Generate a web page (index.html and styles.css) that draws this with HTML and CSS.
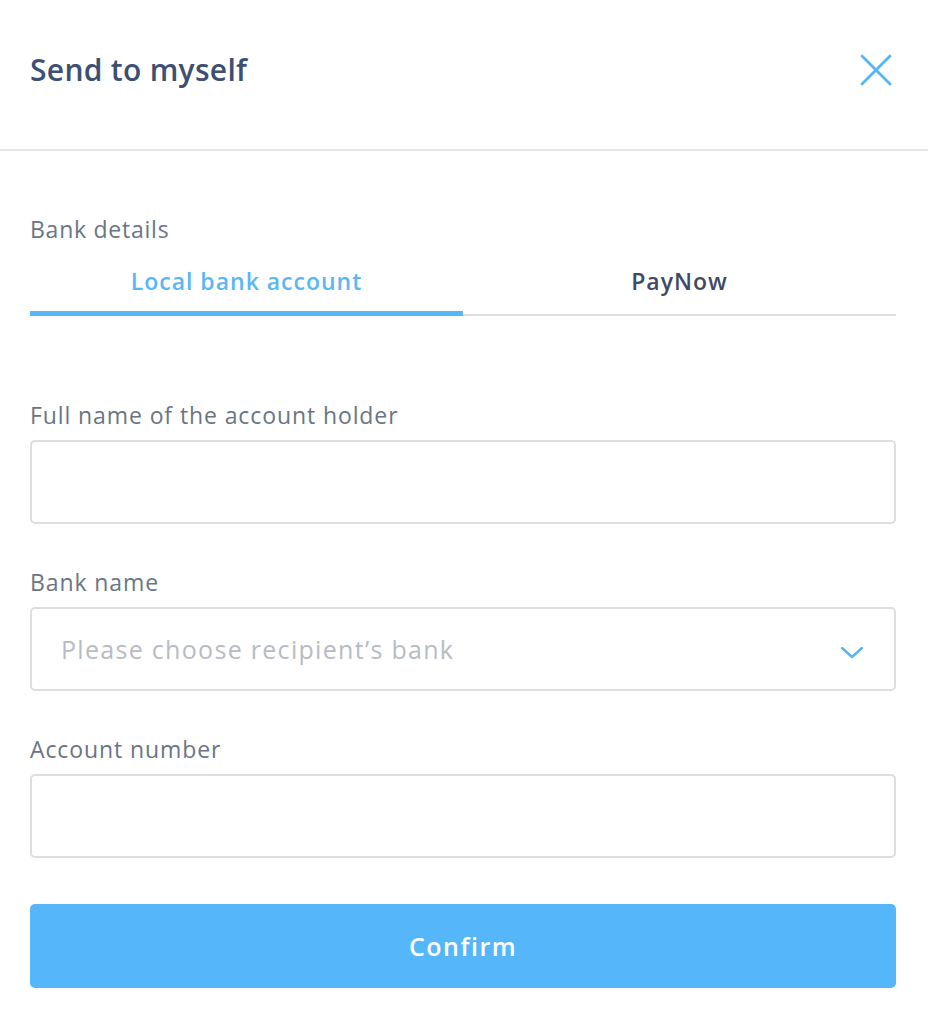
FILE: index.html
```html
<!DOCTYPE html>
<html>
<head>
<meta charset="utf-8">
<link rel="stylesheet" href="styles.css">
</head>
<body>
<div class="modal">
  <header class="header">
    <h1 class="title">Send to myself</h1>
    <button class="close" aria-label="Close">
      <svg width="34" height="34" viewBox="0 0 34 34"><path d="M3 3 L31 31 M31 3 L3 31" stroke="#55b6f5" stroke-width="2.8" stroke-linecap="round" fill="none"/></svg>
    </button>
  </header>
  <main class="body">
    <div class="section-label">Bank details</div>
    <div class="tabs">
      <div class="tab active">Local bank account</div>
      <div class="tab">PayNow</div>
    </div>
    <form class="form">
      <div class="field">
        <label class="label">Full name of the account holder</label>
        <div class="input"></div>
      </div>
      <div class="field">
        <label class="label">Bank name</label>
        <div class="input select">
          <span class="placeholder">Please choose recipient’s bank</span>
          <svg width="24" height="14" viewBox="0 0 24 14"><path d="M2 2 L12 11 L22 2" stroke="#55b6f5" stroke-width="2.4" stroke-linecap="round" stroke-linejoin="round" fill="none"/></svg>
        </div>
      </div>
      <div class="field">
        <label class="label">Account number</label>
        <div class="input"></div>
      </div>
      <div class="button">Confirm</div>
    </form>
  </main>
</div>
</body>
</html>
```

FILE: styles.css
```css
* { box-sizing: border-box; }
html, body { margin: 0; padding: 0; background: #fff; }
body { font-family: "Open Sans", "Lato", sans-serif; width: 928px; }
.modal { width: 928px; }
.header {
  height: 151px;
  border-bottom: 2px solid #e4e5e7;
  display: flex;
  align-items: center;
  justify-content: space-between;
  padding: 0 35px 10px 30px;
}
.title {
  margin: 0;
  font-size: 30px;
  font-weight: 600;
  color: #3d4f72;
  letter-spacing: 0.3px;
}
.close {
  border: 0; background: none; padding: 0; margin: 0;
  width: 34px; height: 34px; display: flex;
}
.body { padding: 63px 32px 0 30px; }
.section-label {
  font-size: 23px;
  color: #6a7584;
  line-height: 30px;
  letter-spacing: 0.75px;
}
.tabs {
  display: flex;
  margin-top: 20px;
  border-bottom: 2px solid #dedfe1;
}
.tab {
  flex: 1;
  text-align: center;
  font-size: 23px;
  font-weight: 600;
  color: #3e4a66;
  letter-spacing: 1px;
  height: 50px;
  line-height: 28px;
  padding-top: 3px;
}
.tab.active {
  color: #5ab7f4;
  border-bottom: 5px solid #55b6f9;
  margin-bottom: -2px;
  height: 52px;
}
.form { padding-top: 84px; display: flex; flex-direction: column; }
.field { display: flex; flex-direction: column; margin-bottom: 43px; }
.label {
  font-size: 23px;
  color: #6a7584;
  line-height: 30px;
  letter-spacing: 0.9px;
  margin-bottom: 10px;
}
.input {
  height: 84px;
  border: 2px solid #dcdee1;
  border-radius: 5px;
}
.select {
  display: flex;
  align-items: center;
  justify-content: space-between;
  padding: 0 30px 0 29px;
}
.placeholder {
  font-size: 25px;
  color: #b7bcc3;
  letter-spacing: 1.3px;
}
.select svg { margin-top: 8px; }
.button {
  margin-top: 3px;
  height: 84px;
  background: #55b7fa;
  border-radius: 5px;
  color: #fff;
  font-size: 25px;
  font-weight: 600;
  letter-spacing: 1.5px;
  display: flex;
  align-items: center;
  justify-content: center;
}
```
